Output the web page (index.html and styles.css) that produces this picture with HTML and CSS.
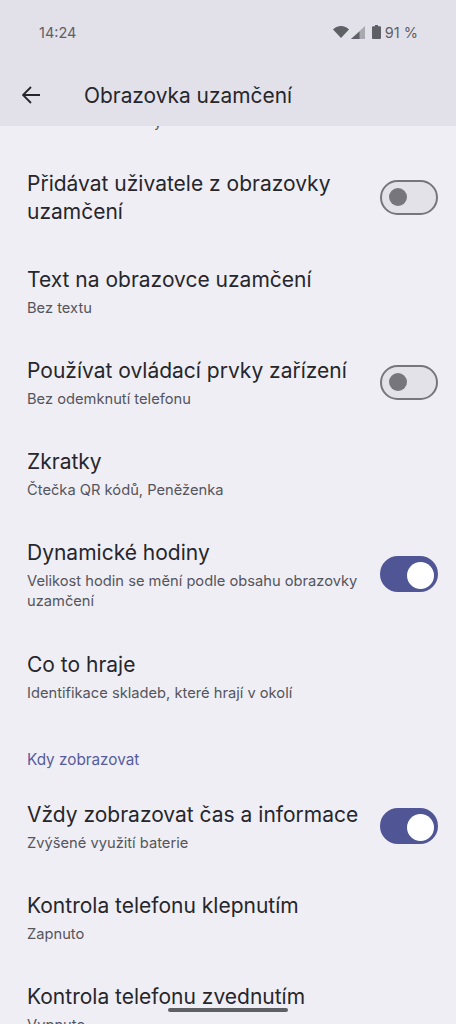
FILE: index.html
```html
<!DOCTYPE html>
<html lang="cs">
<head>
<meta charset="utf-8">
<title>Obrazovka uzamčení</title>
<link rel="stylesheet" href="styles.css">
</head>
<body>
<div class="screen">
  <header class="appbar">
    <div class="status">
      <span class="clock">14:24</span>
      <div class="status-icons">
        <svg class="wifi" viewBox="0 0 16 12"><path d="M0 3.6C2 1.4 4.9 0 8 0s6 1.4 8 3.6L8 12z"/></svg>
        <svg class="signal" viewBox="0 0 14 13"><path class="dim" d="M14 0v13H0z"/><path d="M8.5 5.5V13H0z"/></svg>
        <svg class="battery" viewBox="0 0 9 14"><path d="M3 0h3v1.2h2a1 1 0 0 1 1 1V13a1 1 0 0 1-1 1H1a1 1 0 0 1-1-1V2.2a1 1 0 0 1 1-1h2z"/></svg>
        <span class="pct">91 %</span>
      </div>
    </div>
    <div class="toolbar">
      <svg class="back" viewBox="0 0 20 20"><path d="M18 10H1.5M9 2l-8 8 8 8"/></svg>
      <h1 class="title">Obrazovka uzamčení</h1>
    </div>
  </header>
  <main class="list">
    <div class="peek"><span>y</span></div>
    <div class="row row-first">
      <div class="text"><div class="t">Přidávat uživatele z obrazovky uzamčení</div></div>
      <span class="switch"></span>
    </div>
    <div class="row">
      <div class="text"><div class="t">Text na obrazovce uzamčení</div><div class="s">Bez textu</div></div>
    </div>
    <div class="row">
      <div class="text"><div class="t">Používat ovládací prvky zařízení</div><div class="s">Bez odemknutí telefonu</div></div>
      <span class="switch"></span>
    </div>
    <div class="row">
      <div class="text"><div class="t">Zkratky</div><div class="s">Čtečka QR kódů, Peněženka</div></div>
    </div>
    <div class="row">
      <div class="text"><div class="t">Dynamické hodiny</div><div class="s">Velikost hodin se mění podle obsahu obrazovky uzamčení</div></div>
      <span class="switch on"></span>
    </div>
    <div class="row row-tall">
      <div class="text"><div class="t">Co to hraje</div><div class="s">Identifikace skladeb, které hrají v okolí</div></div>
    </div>
    <div class="section">Kdy zobrazovat</div>
    <div class="row">
      <div class="text"><div class="t">Vždy zobrazovat čas a informace</div><div class="s">Zvýšené využití baterie</div></div>
      <span class="switch on"></span>
    </div>
    <div class="row">
      <div class="text"><div class="t">Kontrola telefonu klepnutím</div><div class="s">Zapnuto</div></div>
    </div>
    <div class="row">
      <div class="text"><div class="t">Kontrola telefonu zvednutím</div><div class="s">Vypnuto</div></div>
    </div>
  </main>
  <div class="home"></div>
</div>
</body>
</html>
```
FILE: styles.css
```css
* { box-sizing: border-box; }
html, body { margin: 0; padding: 0; }
body { background: #efeef5; font-family: Inter, Roboto, "Noto Sans", sans-serif; }
.screen { position: relative; width: 456px; height: 1024px; overflow: hidden; background: #efeef5; }
.appbar { height: 126px; background: #e2e1ea; display: flex; flex-direction: column; }
.status { height: 64px; padding: 0 38px 0 39px; display: flex; align-items: center; justify-content: space-between; color: #5f5f66; font-size: 14.5px; }
.status-icons { display: flex; align-items: center; }
.wifi { width: 16px; height: 12px; fill: #5f5f66; }
.signal { width: 14px; height: 13px; margin-left: 2px; fill: #5f5f66; }
.signal .dim { fill: #a9a9b0; }
.battery { width: 9px; height: 14px; margin-left: 7px; fill: #5f5f66; }
.pct { margin-left: 4px; }
.toolbar { height: 62px; display: flex; align-items: center; padding-left: 22px; }
.back { width: 20px; height: 20px; fill: none; stroke: #26262b; stroke-width: 1.8; }
.title { margin: 0 0 0 42px; font-size: 20.9px; font-weight: 400; color: #26262b; }
.list { display: flex; flex-direction: column; }
.peek { height: 24px; overflow: hidden; padding-left: 154px; font-size: 14px; color: #55555c; }
.peek span { display: block; margin-top: -11px; line-height: 14px; }
.row { display: flex; align-items: center; padding: 19.5px 18px 19.5px 27px; }
.row-first { padding-bottom: 20.5px; }
.row-tall { padding-top: 20.5px; }
.text { flex: 1; min-width: 0; }
.t { font-size: 21px; line-height: 28px; color: #26262b; }
.s { margin-top: 4px; font-size: 14.7px; line-height: 20px; color: #55555c; }
.switch { position: relative; flex: none; width: 58px; height: 35px; margin-left: 16px; margin-top: -1px; border-radius: 18px; background: #e3e2e9; border: 2px solid #77767d; }
.switch::after { content: ""; position: absolute; left: 7px; top: 6.5px; width: 18px; height: 18px; border-radius: 50%; background: #77767d; }
.switch.on { height: 36px; background: #4f5595; border-color: #4f5595; }
.switch.on::after { left: 25px; top: 3.5px; width: 27px; height: 27px; background: #fff; }
.section { padding: 27.5px 27px 11.5px; font-size: 15.3px; line-height: 20px; color: #575c9c; }
.home { position: absolute; left: 168px; top: 1008px; width: 120px; height: 4px; border-radius: 2px; background: #5f5f66; }
```
